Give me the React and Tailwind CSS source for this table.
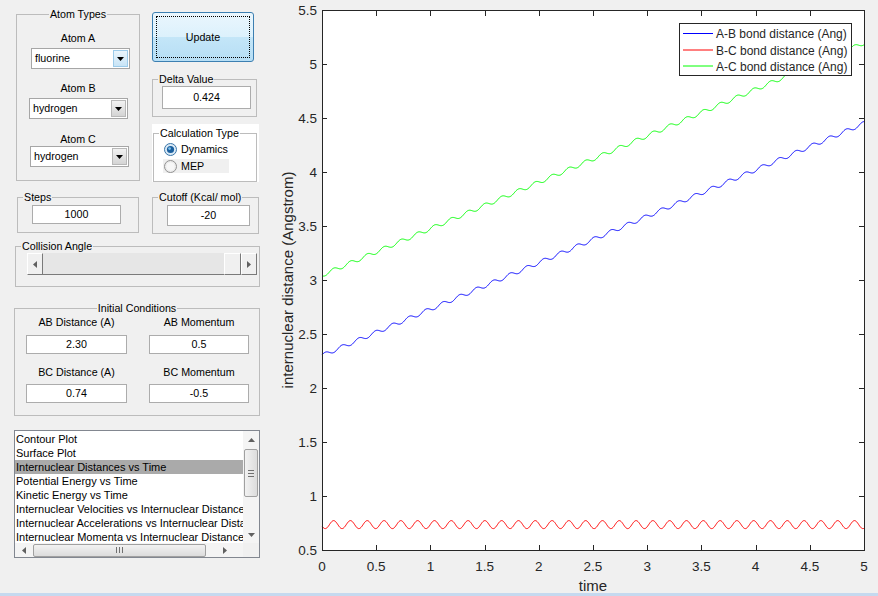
import React from "react";

const GroupBox = ({ title, center, className, children }) => (
  <fieldset className={`border border-[#bcbcbc] ${className}`}>
    <legend
      className={`px-[1px] leading-[14px] ${center ? "mx-auto" : "ml-[5px]"}`}
    >
      {title}
    </legend>
    {children}
  </fieldset>
);

const EditBox = ({ value, className }) => (
  <div
    className={`flex items-center justify-center border border-[#acacac] bg-white ${className}`}
  >
    {value}
  </div>
);

const DownArrow = ({ fill = "#000" }) => (
  <svg width="7" height="4" viewBox="0 0 7 4">
    <path d="M0 0h7L3.5 4z" fill={fill} />
  </svg>
);

const Popup = ({ value, active, className }) => (
  <div
    className={`flex h-[21px] w-[99px] items-center border border-[#a6a6a6] bg-white pl-[3px] pr-[1px] ${className}`}
  >
    <span className="flex-1">{value}</span>
    <span
      className={`flex h-[17px] w-[15px] items-center justify-center border ${
        active
          ? "border-[#9ccbea] bg-[linear-gradient(#eaf5fc,#c8e4f6)]"
          : "border-[#b8b8b8] bg-[linear-gradient(#f2f2f2,#d4d4d4)]"
      }`}
    >
      <DownArrow />
    </span>
  </div>
);

const Radio = ({ checked }) =>
  checked ? (
    <svg width="13" height="13" viewBox="0 0 13 13">
      <circle cx="6.5" cy="6.5" r="6" fill="#dbeaf6" stroke="#3a76a8" />
      <circle cx="6.5" cy="6.5" r="3.6" fill="#1a5f9e" />
      <circle cx="5.6" cy="5.6" r="1.4" fill="#7fc0ec" />
    </svg>
  ) : (
    <svg width="13" height="13" viewBox="0 0 13 13">
      <circle cx="6.5" cy="6.5" r="6" fill="#ececec" stroke="#929292" />
      <circle cx="6.5" cy="6.5" r="4" fill="#f7f7f7" />
    </svg>
  );

const raised =
  "border border-t-white border-l-white border-r-[#7a7a7a] border-b-[#7a7a7a] bg-[#f0f0f0]";

const Slider = () => (
  <div className="ml-[11px] flex h-[22px] w-[230px]">
    <div className={`flex w-[16px] items-center justify-center ${raised}`}>
      <svg width="4" height="7" viewBox="0 0 4 7">
        <path d="M4 0v7L0 3.5z" fill="#606060" />
      </svg>
    </div>
    <div className="flex-1 border-b border-[#7a7a7a] bg-[#e6e6e6]" />
    <div className={`w-[17px] ${raised}`} />
    <div className={`flex w-[16px] items-center justify-center ${raised}`}>
      <svg width="4" height="7" viewBox="0 0 4 7">
        <path d="M0 0v7L4 3.5z" fill="#606060" />
      </svg>
    </div>
  </div>
);

const plotItems = [
  "Contour Plot",
  "Surface Plot",
  "Internuclear Distances vs Time",
  "Potential Energy vs Time",
  "Kinetic Energy vs Time",
  "Internuclear Velocities vs Internuclear Distances",
  "Internuclear Accelerations vs Internuclear Distances",
  "Internuclear Momenta vs Internuclear Distances",
];

const ListBox = () => (
  <div className="ml-[14px] mt-[14px] flex h-[128px] w-[246px] flex-col border border-[#828790] bg-white">
    <div className="flex h-[112px]">
      <div className="w-[228px] overflow-hidden pt-[1px] text-[11px]">
        {plotItems.map((item, i) => (
          <div
            key={item}
            className={`whitespace-nowrap pl-[1px] leading-[14px] ${
              i === 2 ? "bg-[#aaaaaa]" : ""
            }`}
          >
            {item}
          </div>
        ))}
      </div>
      <div className="flex w-[16px] flex-col items-center bg-[#f4f4f4]">
        <div className="flex h-[17px] items-center">
          <svg width="7" height="4" viewBox="0 0 7 4">
            <path d="M0 4h7L3.5 0z" fill="#606060" />
          </svg>
        </div>
        <div className="mt-[1px] flex h-[48px] w-[14px] flex-col items-center justify-center gap-[2px] rounded-[2px] border border-[#a0a0a0] bg-[linear-gradient(to_right,#f2f2f2,#dcdcdc)]">
          <div className="h-[1px] w-[6px] bg-[#707070]" />
          <div className="h-[1px] w-[6px] bg-[#707070]" />
          <div className="h-[1px] w-[6px] bg-[#707070]" />
        </div>
        <div className="flex-1" />
        <div className="flex h-[17px] items-center">
          <DownArrow fill="#606060" />
        </div>
      </div>
    </div>
    <div className="flex h-[14px]">
      <div className="flex w-[228px] items-center bg-[#f4f4f4]">
        <div className="flex w-[17px] justify-center">
          <svg width="4" height="7" viewBox="0 0 4 7">
            <path d="M4 0v7L0 3.5z" fill="#606060" />
          </svg>
        </div>
        <div className="ml-[1px] flex h-[13px] w-[173px] items-center justify-center gap-[2px] rounded-[2px] border border-[#a0a0a0] bg-[linear-gradient(#f2f2f2,#dcdcdc)]">
          <div className="h-[6px] w-[1px] bg-[#707070]" />
          <div className="h-[6px] w-[1px] bg-[#707070]" />
          <div className="h-[6px] w-[1px] bg-[#707070]" />
        </div>
        <div className="flex flex-1 justify-center">
          <svg width="4" height="7" viewBox="0 0 4 7">
            <path d="M0 0v7L4 3.5z" fill="#606060" />
          </svg>
        </div>
      </div>
      <div className="flex-1 bg-[#f0f0f0]" />
    </div>
  </div>
);

const X = (t) => 322 + t * 108.4;
const Y = (v) => 10 + (5.5 - v) * 108;

const buildLines = () => {
  const ab = [];
  const bc = [];
  const ac = [];
  for (let i = 0; i <= 1000; i++) {
    const t = i * 0.005;
    const d = -0.037 * Math.cos((2 * Math.PI * (t - 0.03)) / 0.155);
    const base = 2.3 + 0.43 * t;
    const x = X(t).toFixed(2);
    ab.push(`${x},${Y(base - 0.5 * d).toFixed(2)}`);
    bc.push(`${x},${Y(0.735 + d).toFixed(2)}`);
    ac.push(`${x},${Y(base + 0.745 + 0.5 * d).toFixed(2)}`);
  }
  return { ab: ab.join(" "), bc: bc.join(" "), ac: ac.join(" ") };
};

const Chart = () => {
  const lines = buildLines();
  const xTicks = [0, 0.5, 1, 1.5, 2, 2.5, 3, 3.5, 4, 4.5, 5];
  const yTicks = [0.5, 1, 1.5, 2, 2.5, 3, 3.5, 4, 4.5, 5, 5.5];
  const ink = "#262626";

  return (
    <svg width="608" height="593" viewBox="270 0 608 593" className="shrink-0">
      <rect x="322" y="10" width="542" height="540" fill="#fff" />
      <polyline points={lines.ab} fill="none" stroke="#0000ff" strokeWidth="1" />
      <polyline points={lines.bc} fill="none" stroke="#ff0000" strokeWidth="1" />
      <polyline points={lines.ac} fill="none" stroke="#00ff00" strokeWidth="1" />
      <rect
        x="322.5"
        y="10.5"
        width="542"
        height="540"
        fill="none"
        stroke={ink}
      />
      {xTicks.map((t) => {
        const x = Math.round(X(t)) + 0.5;
        return (
          <g key={t}>
            <line x1={x} x2={x} y1="550" y2="545" stroke={ink} />
            <line x1={x} x2={x} y1="11" y2="16" stroke={ink} />
            <text
              x={X(t)}
              y="571"
              fontSize="13.5"
              fill={ink}
              textAnchor="middle"
            >
              {t}
            </text>
          </g>
        );
      })}
      {yTicks.map((v) => {
        const y = Math.round(Y(v)) + 0.5;
        return (
          <g key={v}>
            <line x1="322" x2="327" y1={y} y2={y} stroke={ink} />
            <line x1="864" x2="859" y1={y} y2={y} stroke={ink} />
            <text
              x="317"
              y={Y(v) + 5}
              fontSize="13.5"
              fill={ink}
              textAnchor="end"
            >
              {v}
            </text>
          </g>
        );
      })}
      <text
        transform="translate(293 280) rotate(-90)"
        fontSize="15"
        fill={ink}
        textAnchor="middle"
      >
        internuclear distance (Angstrom)
      </text>
      <text x="593" y="591" fontSize="15" fill={ink} textAnchor="middle">
        time
      </text>

      <rect x="679.5" y="23.5" width="172" height="52" fill="#fff" stroke={ink} />
      <line x1="683" x2="713" y1="33.5" y2="33.5" stroke="#0000ff" />
      <line x1="683" x2="713" y1="50" y2="50" stroke="#ff0000" />
      <line x1="683" x2="713" y1="66" y2="66" stroke="#00ff00" />
      <text x="716" y="38" fontSize="12" fill={ink}>
        A-B bond distance (Ang)
      </text>
      <text x="716" y="54.5" fontSize="12" fill={ink}>
        B-C bond distance (Ang)
      </text>
      <text x="716" y="71" fontSize="12" fill={ink}>
        A-C bond distance (Ang)
      </text>
    </svg>
  );
};

const App = () => {
  return (
    <div className="flex h-[596px] w-[878px] flex-col overflow-hidden bg-[#f0f0f0] font-['Liberation_Sans',Arial,sans-serif] text-[10.7px] text-black">
      <div className="flex h-[593px]">
        {/* left control panel */}
        <div className="w-[270px] shrink-0">
          <div className="flex items-start pt-[7px]">
            <GroupBox
              title="Atom Types"
              center
              className="ml-[16px] h-[174px] w-[124px]"
            >
              <div className="mt-[10px] text-center leading-[14px]">Atom A</div>
              <Popup value="fluorine" active className="ml-[14px] mt-[3px]" />
              <div className="mt-[12px] text-center leading-[14px]">Atom B</div>
              <Popup value="hydrogen" className="ml-[12px] mt-[3px]" />
              <div className="mt-[13px] text-center leading-[14px]">Atom C</div>
              <Popup value="hydrogen" className="ml-[13px]" />
            </GroupBox>

            <div className="ml-[12px] flex flex-col">
              <button className="mt-[5px] h-[50px] w-[102px] rounded-[3px] border border-[#3c7fb1] bg-[linear-gradient(#eaf6fd_0%,#dcf1fc_50%,#c4e6f8_50%,#b6def5_100%)] p-[3px]">
                <div className="flex h-full items-center justify-center border border-dotted border-black">
                  Update
                </div>
              </button>

              <GroupBox title="Delta Value" className="mt-[10px] h-[45px] w-[105px]">
                <EditBox value="0.424" className="ml-[9px] h-[23px] w-[89px]" />
              </GroupBox>

              <div className="mt-[7px] h-[58px] w-[107px] bg-white pt-[2px] pl-[1px]">
                <GroupBox title="Calculation Type" className="h-[56px] w-[104px]">
                  <div className="ml-[10px] mt-[2px] flex h-[14px] items-center gap-[4px]">
                    <Radio checked />
                    <span>Dynamics</span>
                  </div>
                  <div className="ml-[9px] mt-[3px] flex h-[14px] w-[66px] items-center gap-[4px] bg-[#f0f0f0] pl-[1px]">
                    <Radio />
                    <span>MEP</span>
                  </div>
                </GroupBox>
              </div>
            </div>
          </div>

          <div className="mt-[8px] flex items-start">
            <GroupBox title="Steps" className="ml-[17px] h-[43px] w-[122px]">
              <EditBox value="1000" className="ml-[14px] mt-[1px] h-[19px] w-[89px]" />
            </GroupBox>
            <GroupBox
              title="Cutoff (Kcal/ mol)"
              className="ml-[13px] h-[44px] w-[107px]"
            >
              <EditBox value="-20" className="ml-[14px] mt-[1px] h-[21px] w-[83px]" />
            </GroupBox>
          </div>

          <GroupBox
            title="Collision Angle"
            className="ml-[15px] mt-[5px] h-[48px] w-[245px]"
          >
            <Slider />
          </GroupBox>

          <GroupBox
            title="Initial Conditions"
            center
            className="ml-[14px] mt-[14px] h-[115px] w-[246px]"
          >
            <div className="flex">
              <div className="ml-[11px] w-[101px]">
                <div className="text-center leading-[14px]">AB Distance (A)</div>
                <EditBox value="2.30" className="mt-[6px] h-[19px]" />
                <div className="mt-[11px] text-center leading-[14px]">
                  BC Distance (A)
                </div>
                <EditBox value="0.74" className="mt-[5px] h-[19px]" />
              </div>
              <div className="ml-[22px] w-[100px]">
                <div className="text-center leading-[14px]">AB Momentum</div>
                <EditBox value="0.5" className="mt-[6px] h-[19px]" />
                <div className="mt-[11px] text-center leading-[14px]">
                  BC Momentum
                </div>
                <EditBox value="-0.5" className="mt-[5px] h-[19px]" />
              </div>
            </div>
          </GroupBox>

          <ListBox />
        </div>

        <Chart />
      </div>
      <div className="h-[3px] bg-[#c5d9ef]" />
    </div>
  );
};

export default App;
